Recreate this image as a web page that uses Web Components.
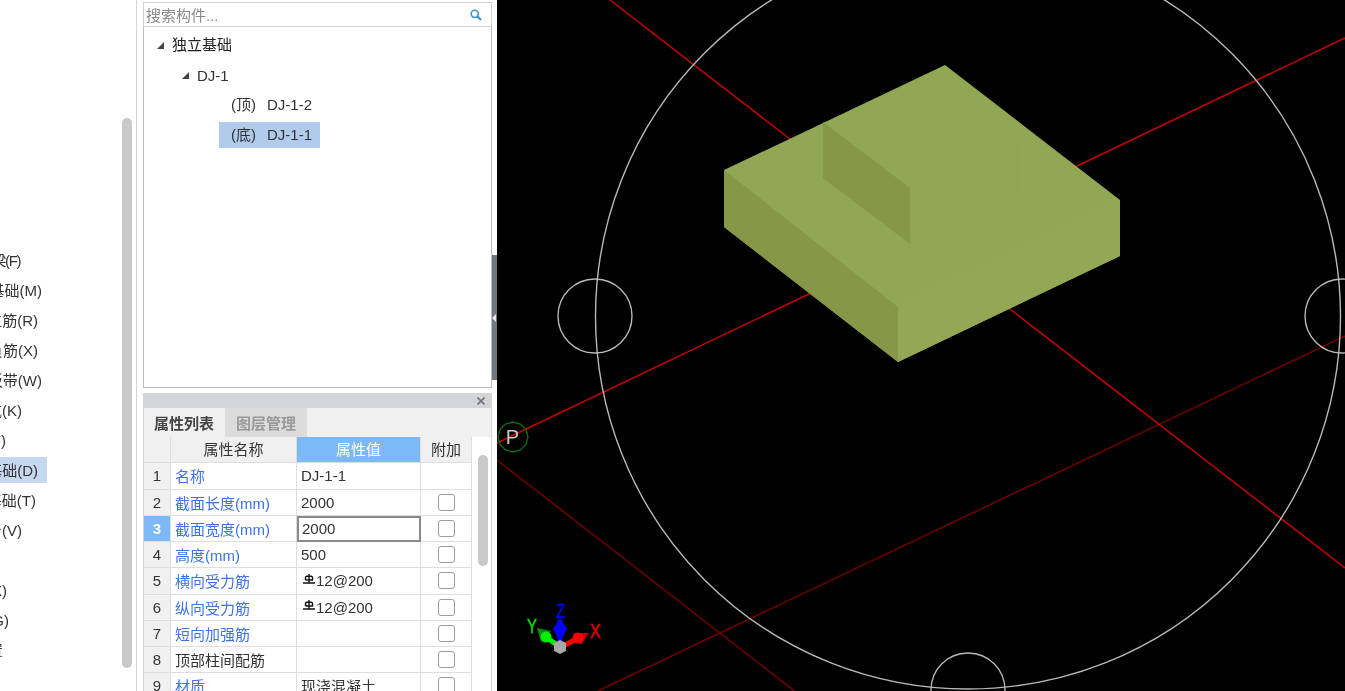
<!DOCTYPE html>
<html lang="zh">
<head>
<meta charset="utf-8">
<style>
  html, body { margin: 0; height: 100%; overflow: hidden; background: #fff; }
  body { font: 15px "Liberation Sans", "Noto Sans CJK SC", sans-serif; color: #333; }
</style>
</head>
<body>
<app-shell>
  <category-list slot="left"></category-list>
  <tree-panel slot="middle"></tree-panel>
  <prop-panel slot="middle"></prop-panel>
  <model-view slot="right"></model-view>
</app-shell>

<script>
const FONT = '"Liberation Sans", "Noto Sans CJK SC", sans-serif';
const SOFT = 'filter: blur(0.35px);';

class AppShell extends HTMLElement {
    constructor() {
        super();
        this.attachShadow({ mode: 'open' });
        this.shadowRoot.innerHTML = `
          <style>
            :host { display: grid; grid-template-columns: 143px 349px 5px 848px; height: 691px; font-family: ${FONT}; }
            .middle { display: flex; flex-direction: column; min-width: 0; height: 691px; overflow: hidden; }
            .gutter { background: #fff; display: flex; flex-direction: column; padding-top: 255px; }
            .grip { height: 125px; width: 5px; background: #6f7783; display: flex; align-items: center; }
            .grip i { width: 0; height: 0; border: 4px solid transparent; border-right: 4px solid #e8eaee; border-left: 0; }
          </style>
          <slot name="left"></slot>
          <div class="middle"><slot name="middle"></slot></div>
          <div class="gutter"><div class="grip"><i></i></div></div>
          <slot name="right"></slot>
        `;
    }
}

class CategoryList extends HTMLElement {
    constructor() {
        super();
        this.attachShadow({ mode: 'open' });
        // the names run off the left of the window, so each row is set by where its text ends
        const rows = [
            ['基础梁(F)', 20, 0, -1.4], ['筏板基础(M)', 42], ['筏板主筋(R)', 38], ['筏板负筋(X)', 38],
            ['基础板带(W)', 42], ['集水坑(K)', 22], ['柱墩(Y)', 6], ['独立基础(D)', 38, true],
            ['条形基础(T)', 36], ['桩承台(V)', 22], ['', 0], ['垫层(X)', 7], ['地沟(G)', 9], ['砖胎膜设置', 3]
        ];
        const html = rows.map(r => `
            <div class="row${r[2] ? ' on' : ''}"><span style="width:${r[1]}px;letter-spacing:${r[3] || 0}px">${r[0]}</span></div>`).join('');
        this.shadowRoot.innerHTML = `
          <style>
            :host { display: block; position: relative; height: 691px; padding-top: 245px; box-sizing: border-box; overflow: hidden; border-right: 1px solid #d4d4d4; margin-right: 6px; background: #fff; }
            .row { height: 30px; width: 47px; display: flex; align-items: center; color: #333; white-space: nowrap; box-sizing: border-box; }
            .row span { display: flex; justify-content: flex-end; margin-bottom: 2px; ${SOFT} }
            .on { background: #c6d8ef; height: 26px; margin: 2px 0; }
            .bar { position: absolute; left: 122px; top: 118px; width: 10px; height: 550px; border-radius: 5px; background: #c9c9c9; }
          </style>
          ${html}
          <div class="bar"></div>
        `;
    }
}

class TreePanel extends HTMLElement {
    constructor() {
        super();
        this.attachShadow({ mode: 'open' });
        this.shadowRoot.innerHTML = `
          <style>
            :host { display: flex; flex-direction: column; height: 388px; box-sizing: border-box; padding-top: 2px; }
            .search { height: 25px; box-sizing: border-box; border: 1px solid #d0d0d0; display: flex; align-items: center; justify-content: space-between; padding: 0 9px 0 2px; color: #8a8a8a; }
            .search span { ${SOFT} }
            .tree { flex: 1; border: 1px solid #bdbdbd; border-top: 0; display: flex; flex-direction: column; padding-top: 3px; color: #333; }
            .node { height: 30px; display: flex; align-items: center; }
            .node span { ${SOFT} }
            .node em { font-style: normal; margin-left: 11px; }
            .arrow { width: 0; height: 0; border-style: solid; border-width: 0 0 7px 7px; border-color: transparent transparent #444 transparent; margin: 1px 8px 0 0; }
            .lvl0 { padding-left: 13px; color: #222; }
            .lvl0 span, .lvl2 span { margin-bottom: 4px; }
            .lvl1 { padding-left: 38px; }
            .lvl2 { margin-left: 75px; padding-left: 12px; width: 89px; }
            .sel { background: #b0cbec; height: 26px; margin-top: 2px; margin-bottom: 2px; }
          </style>
          <div class="search">
            <span>搜索构件...</span>
            <svg width="12" height="12" viewBox="0 0 12 12"><circle cx="4.8" cy="4.8" r="3.6" fill="none" stroke="#3f93c6" stroke-width="1.6"/><path d="M7.4 7.4 L11 11" stroke="#3f93c6" stroke-width="2.2"/></svg>
          </div>
          <div class="tree">
            <div class="node lvl0"><i class="arrow"></i><span>独立基础</span></div>
            <div class="node lvl1"><i class="arrow"></i><span>DJ-1</span></div>
            <div class="node lvl2"><span>(顶)<em>DJ-1-2</em></span></div>
            <div class="node lvl2 sel"><span>(底)<em>DJ-1-1</em></span></div>
          </div>
        `;
    }
}

class PropPanel extends HTMLElement {
    constructor() {
        super();
        this.attachShadow({ mode: 'open' });
        const rebar = `<svg class="rebar" width="12" height="10" viewBox="0 0 12 10"><path d="M2.5 6 V3.5 Q2.5 2 6 2 Q9.5 2 9.5 3.5 V6 H2.5 M6 0 V9 M0 9 H12" fill="none" stroke="#111" stroke-width="1.4"/></svg>`;
        const props = [
            ['名称', 'DJ-1-1', 1, 0], ['截面长度(mm)', '2000', 1, 1], ['截面宽度(mm)', '2000', 1, 1],
            ['高度(mm)', '500', 1, 1], ['横向受力筋', rebar + '12@200', 1, 1], ['纵向受力筋', rebar + '12@200', 1, 1],
            ['短向加强筋', '', 1, 1], ['顶部柱间配筋', '', 0, 1], ['材质', '现浇混凝土', 1, 1]
        ];
        const rows = props.map((p, i) => `
            <div class="num${i === 2 ? ' cur' : ''}"><span>${i + 1}</span></div>
            <div class="name${p[2] ? ' link' : ''}"><span>${p[0]}</span></div>
            <div class="val${i === 2 ? ' edit' : ''}"><span>${p[1]}</span></div>
            <div class="add">${p[3] ? '<i class="box"></i>' : ''}</div>`).join('');
        this.shadowRoot.innerHTML = `
          <style>
            :host { display: block; margin-top: 5px; flex: 1; min-height: 0; background: #f0f0f0; border: 1px solid #d4d4d4; border-bottom: 0; position: relative; overflow: hidden; }
            span { ${SOFT} display: flex; align-items: center; }
            .head { height: 14px; background: #d3d5d9; display: flex; justify-content: flex-end; align-items: center; padding-right: 6px; }
            .tabs { display: flex; height: 29px; background: #f0f0f0; }
            .tab { width: 80px; display: flex; align-items: center; justify-content: center; font-weight: bold; color: #444; }
            .tab.off { width: 82px; background: #dcdcdc; color: #9a9a9a; margin-left: 1px; }
            .body { display: flex; background: #fff; }
            .grid { display: grid; grid-template-columns: 27px 126px 124px 51px; grid-auto-rows: 26.25px; width: 329px; flex: none; }
            .grid > div { box-sizing: border-box; border-right: 1px solid #dedede; border-bottom: 1px solid #dedede; display: flex; align-items: center; white-space: nowrap; overflow: hidden; background: #fff; color: #333; }
            .hd, .num { justify-content: center; background: #f0f0f0 !important; }
            .hd { padding-bottom: 2px; }
            .hd.active { background: #7db9f7 !important; color: #fff !important; }
            .name { padding-left: 4px; }
            .link { color: #3f72e6 !important; }
            .val { padding-left: 4px; }
            .rebar { margin: 0 1px 4px 2px; flex: none; }
            .cur { background: #7db9f7 !important; color: #fff !important; font-weight: bold; }
            .edit { border: 2px solid #8a8a8a !important; padding-left: 3px; }
            .add { justify-content: center; }
            .box { width: 17px; height: 17px; box-sizing: border-box; border: 1.5px solid #9c9c9c; border-radius: 3px; background: #fff; }
            .rail { flex: 1; position: relative; background: #fff; }
            .thumb { position: absolute; left: 5px; top: 18px; width: 10px; height: 111px; border-radius: 5px; background: #c9c9c9; }
          </style>
          <div class="head"><svg width="8" height="8" viewBox="0 0 8 8"><path d="M0.5 0.5 L7.5 7.5 M7.5 0.5 L0.5 7.5" stroke="#74767b" stroke-width="1.7"/></svg></div>
          <div class="tabs"><div class="tab"><span>属性列表</span></div><div class="tab off"><span>图层管理</span></div></div>
          <div class="body">
            <div class="grid">
              <div class="hd"></div><div class="hd"><span>属性名称</span></div><div class="hd active"><span>属性值</span></div><div class="hd"><span>附加</span></div>
              ${rows}
            </div>
            <div class="rail"><div class="thumb"></div></div>
          </div>
        `;
    }
}

class ModelView extends HTMLElement {
    constructor() {
        super();
        this.attachShadow({ mode: 'open' });
        // svg x is page x, the viewBox starts where this pane starts
        this.shadowRoot.innerHTML = `
          <style>
            :host { display: block; height: 691px; background: #000; position: relative; overflow: hidden; }
            svg { display: block; filter: blur(0.4px); }
            text { font-family: "Liberation Sans", sans-serif; }
          </style>
          <svg width="848" height="691" viewBox="497 0 848 691">
            <g fill="none" stroke-width="1.5">
              <path d="M497 460 L797 693" stroke="#700000"/>
              <path d="M598 691 L1345 336" stroke="#700000"/>
              <path d="M610 0 L1345 568" stroke="#c80000"/>
              <path d="M497 443 L1345 38" stroke="#c80000"/>
            </g>
            <g fill="none" stroke="#b8b8b8" stroke-width="1.4">
              <circle cx="968" cy="316.5" r="372.5"/>
              <circle cx="595" cy="316" r="37"/>
              <circle cx="1342" cy="316" r="37"/>
              <circle cx="968" cy="690" r="37"/>
            </g>
            <polygon points="528,437 526,444.5 520.5,450 513,452 505.5,450 500,444.5 498,437 500,429.5 505.5,424 513,422 520.5,424 526,429.5" fill="none" stroke="#0a7014" stroke-width="1.3"/>
            <text x="512.5" y="444" fill="#c8c8c8" font-size="20" text-anchor="middle">P</text>

            <polygon points="724,170 945,65 1120,200 1120,256 898,362 724,227" fill="#91a754"/>
            <polygon points="898,307 1120,200 1120,256 898,362" fill="#92a855"/>
            <polygon points="724,170 898,307 898,362 724,227" fill="#869848"/>
            <polygon points="910,188 1021,138 1021,193 910,244" fill="#90a653"/>
            <polygon points="823,122 910,188 910,244 823,178" fill="#869848"/>

            <path d="M560 648 L560 620" stroke="#0000ff" stroke-width="5"/>
            <polygon points="560,618 567,629 560,642 553,629" fill="#0000ff"/>
            <polygon points="537,628 551,631 541,642" fill="#0c8a0c"/>
            <path d="M557 645 L546 637" stroke="#00f000" stroke-width="5"/>
            <circle cx="546" cy="637" r="5.5" fill="#00f000"/>
            <polygon points="589,633 574,633 581,645" fill="#c00000"/>
            <path d="M565 645 L578 638" stroke="#ff0000" stroke-width="5"/>
            <circle cx="578" cy="638" r="5.5" fill="#ff0000"/>
            <polygon points="560,640 566,643 566,651 560,654 554,651 554,643" fill="#a8a8a8"/>
            <g stroke-width="0.5">
              <text x="527" y="633" fill="#00e000" stroke="#00e000" font-size="20" textLength="10" lengthAdjust="spacingAndGlyphs">Y</text>
              <text x="556" y="618" fill="#0000ff" stroke="#0000ff" font-size="20" textLength="9" lengthAdjust="spacingAndGlyphs">Z</text>
              <text x="590" y="638" fill="#e00000" stroke="#e00000" font-size="21" textLength="11" lengthAdjust="spacingAndGlyphs">X</text>
            </g>
          </svg>
        `;
    }
}

customElements.define('app-shell', AppShell);
customElements.define('category-list', CategoryList);
customElements.define('tree-panel', TreePanel);
customElements.define('prop-panel', PropPanel);
customElements.define('model-view', ModelView);
</script>
</body>
</html>
